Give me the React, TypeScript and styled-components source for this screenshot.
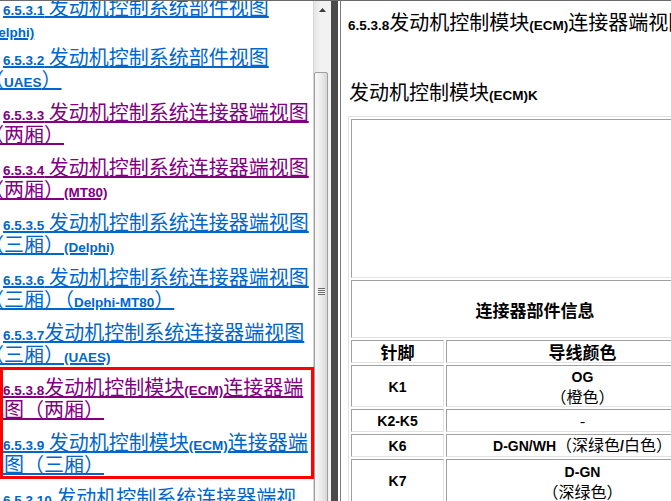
import styled, { createGlobalStyle } from "styled-components";

const GlobalStyle = createGlobalStyle`
  html, body {
    margin: 0;
    padding: 0;
    background: #fff;
    overflow: hidden;
  }
  body {
    font-family: "Noto Sans CJK SC", "Liberation Sans", sans-serif;
  }
`;

const Frame = styled.div`
  display: flex;
  width: 671px;
  height: 501px;
  box-sizing: border-box;
  border-top: 1px solid #6a6a6a;
  overflow: hidden;
`;

const NavPane = styled.div`
  position: relative;
  display: flex;
  flex: none;
`;

const NavScroll = styled.div`
  width: 313px;
  overflow: hidden;
`;

const NavList = styled.ul`
  list-style: none;
  margin: -5px 0 0 -16px;
  padding: 0;
  width: 329px;
`;

const NavItem = styled.li<{ $tight?: boolean }>`
  margin-bottom: ${(p) => (p.$tight ? 6 : 11)}px;
  text-indent: 19px;
  font-size: 20px;
  line-height: 22px;
`;

const NavLink = styled.a<{ $visited?: boolean }>`
  color: ${(p) => (p.$visited ? "#800080" : "#0066cc")};
  text-decoration: underline;
  cursor: pointer;
`;

const Latin = styled.span`
  font-family: "Liberation Sans", Arial, sans-serif;
  font-weight: bold;
  font-size: 13.5px;
  line-height: 1;
`;

const Highlight = styled.div`
  position: absolute;
  left: 0;
  top: 366px;
  width: 314px;
  height: 112px;
  box-sizing: border-box;
  border: 3px solid #ff0000;
  pointer-events: none;
`;

const Scrollbar = styled.div`
  width: 14px;
  padding-right: 3px;
  border-left: 1px solid #d6d6d6;
  background: linear-gradient(to right, #e4e4e4, #f2f2f2 40%, #f2f2f2);
  display: flex;
  flex-direction: column;
`;

const ArrowButton = styled.div`
  flex: none;
  height: 17px;
  display: flex;
  align-items: center;
  justify-content: center;
  margin-left: 2px;
`;

const ThumbGap = styled.div`
  flex: none;
  height: 54px;
`;

const Thumb = styled.div`
  flex: none;
  height: 438px;
  box-sizing: border-box;
  border: 1px solid #9e9e9e;
  border-radius: 2px;
  background: linear-gradient(to right, #f8f8f8, #ececec 50%, #d8d8d8);
  display: flex;
  align-items: center;
  justify-content: center;
`;

const Grip = styled.div`
  width: 7px;
  height: 7px;
  background: repeating-linear-gradient(
    to bottom,
    #6a6a6a 0,
    #6a6a6a 1px,
    #f4f4f4 1px,
    #f4f4f4 2px
  );
`;

const Splitter = styled.div`
  flex: none;
  width: 7px;
  margin-right: 2px;
  background: #4b4b4b;
`;

const ContentPane = styled.div`
  flex: 1;
  min-width: 0;
  border-left: 1px solid #7a7a7a;
  padding: 10px 0 0 7px;
  overflow: hidden;
  color: #000;
`;

const DocTitle = styled.h3`
  margin: 0;
  white-space: nowrap;
  font-size: 20px;
  line-height: 22px;
  font-weight: normal;
`;

const SectionTitle = styled.h4`
  margin: 48px 0 0 1px;
  white-space: nowrap;
  font-size: 20px;
  line-height: 22px;
  font-weight: normal;
`;

const PinTable = styled.table`
  margin-top: 13px;
  width: 374px;
  border-collapse: separate;
  border-spacing: 2px;
  border: 1px solid;
  border-color: #e2e2e2 #a0a0a0 #a0a0a0 #e2e2e2;
`;

const Cell = styled.td<{ $h: number; $bold?: boolean; $w?: number }>`
  box-sizing: border-box;
  height: ${(p) => p.$h}px;
  ${(p) => (p.$w ? `width: ${p.$w}px;` : "")}
  padding: 0;
  border: 1px solid;
  border-color: #a0a0a0 #e2e2e2 #e2e2e2 #a0a0a0;
  text-align: center;
  vertical-align: middle;
  font-size: ${(p) => (p.$bold ? 17 : 16)}px;
  font-weight: ${(p) => (p.$bold ? "bold" : "normal")};
  line-height: 19px;
  color: #000;
`;

const Code = styled.span`
  font-family: "Liberation Sans", Arial, sans-serif;
  font-weight: bold;
  font-size: 14px;
`;

const UpArrow = () => (
  <svg width="7" height="4" viewBox="0 0 7 4">
    <path d="M3.5 0 L7 4 L0 4 Z" fill="#3a3a3a" />
  </svg>
);

// split a title into CJK runs and half-width runs
const Mixed = ({ text }: { text: string }) => (
  <>
    {text.split(/([\x21-\x7e]+)/).map((part, i) =>
      i % 2 === 1 ? <Latin key={i}>{part}</Latin> : part
    )}
  </>
);

interface INavItem {
  title: string;
  visited?: boolean;
}

const navItems: INavItem[] = [
  { title: "6.5.3.1 发动机控制系统部件视图(Delphi)" },
  { title: "6.5.3.2 发动机控制系统部件视图（UAES）" },
  { title: "6.5.3.3 发动机控制系统连接器端视图（两厢）", visited: true },
  { title: "6.5.3.4 发动机控制系统连接器端视图（两厢）(MT80)", visited: true },
  { title: "6.5.3.5 发动机控制系统连接器端视图（三厢）(Delphi)" },
  { title: "6.5.3.6 发动机控制系统连接器端视图（三厢）（Delphi-MT80）" },
  { title: "6.5.3.7发动机控制系统连接器端视图（三厢）(UAES)" },
  { title: "6.5.3.8发动机控制模块(ECM)连接器端视图（两厢）", visited: true },
  { title: "6.5.3.9 发动机控制模块(ECM)连接器端视图（三厢）" },
  { title: "6.5.3.10 发动机控制系统连接器端视图" },
];

interface IPin {
  pin: string;
  color: React.ReactNode;
  h: number;
}

const pins: IPin[] = [
  {
    pin: "K1",
    h: 39,
    color: (
      <>
        <Code>OG</Code>
        <br />（橙色）
      </>
    ),
  },
  { pin: "K2-K5", h: 23, color: "-" },
  {
    pin: "K6",
    h: 23,
    color: (
      <>
        <Code>D-GN/WH</Code>（深绿色<Code>/</Code>白色）
      </>
    ),
  },
  {
    pin: "K7",
    h: 43,
    color: (
      <>
        <Code>D-GN</Code>
        <br />（深绿色）
      </>
    ),
  },
  { pin: "K8", h: 39, color: "" },
];

const App = () => {
  return (
    <>
      <GlobalStyle />
      <Frame>
        <NavPane>
          <NavScroll>
            <NavList>
              {navItems.map((item, i) => (
                <NavItem key={item.title} $tight={i === 0}>
                  <NavLink $visited={item.visited}>
                    <Mixed text={item.title} />
                  </NavLink>
                </NavItem>
              ))}
            </NavList>
          </NavScroll>
          <Scrollbar>
            <ArrowButton>
              <UpArrow />
            </ArrowButton>
            <ThumbGap />
            <Thumb>
              <Grip />
            </Thumb>
          </Scrollbar>
          <Highlight />
        </NavPane>
        <Splitter />
        <ContentPane>
          <DocTitle>
            <Mixed text="6.5.3.8发动机控制模块(ECM)连接器端视图（两厢）" />
          </DocTitle>
          <SectionTitle>
            <Mixed text="发动机控制模块(ECM)K" />
          </SectionTitle>
          <PinTable>
            <tbody>
              <tr>
                <Cell $h={159} colSpan={2} />
              </tr>
              <tr>
                <Cell $h={58} colSpan={2} $bold>
                  连接器部件信息
                </Cell>
              </tr>
              <tr>
                <Cell $h={23} $w={93} $bold>
                  针脚
                </Cell>
                <Cell $h={23} $bold>
                  导线颜色
                </Cell>
              </tr>
              {pins.map((p) => (
                <tr key={p.pin}>
                  <Cell $h={p.h}>
                    <Code>{p.pin}</Code>
                  </Cell>
                  <Cell $h={p.h}>{p.color}</Cell>
                </tr>
              ))}
            </tbody>
          </PinTable>
        </ContentPane>
      </Frame>
    </>
  );
};

export default App;
